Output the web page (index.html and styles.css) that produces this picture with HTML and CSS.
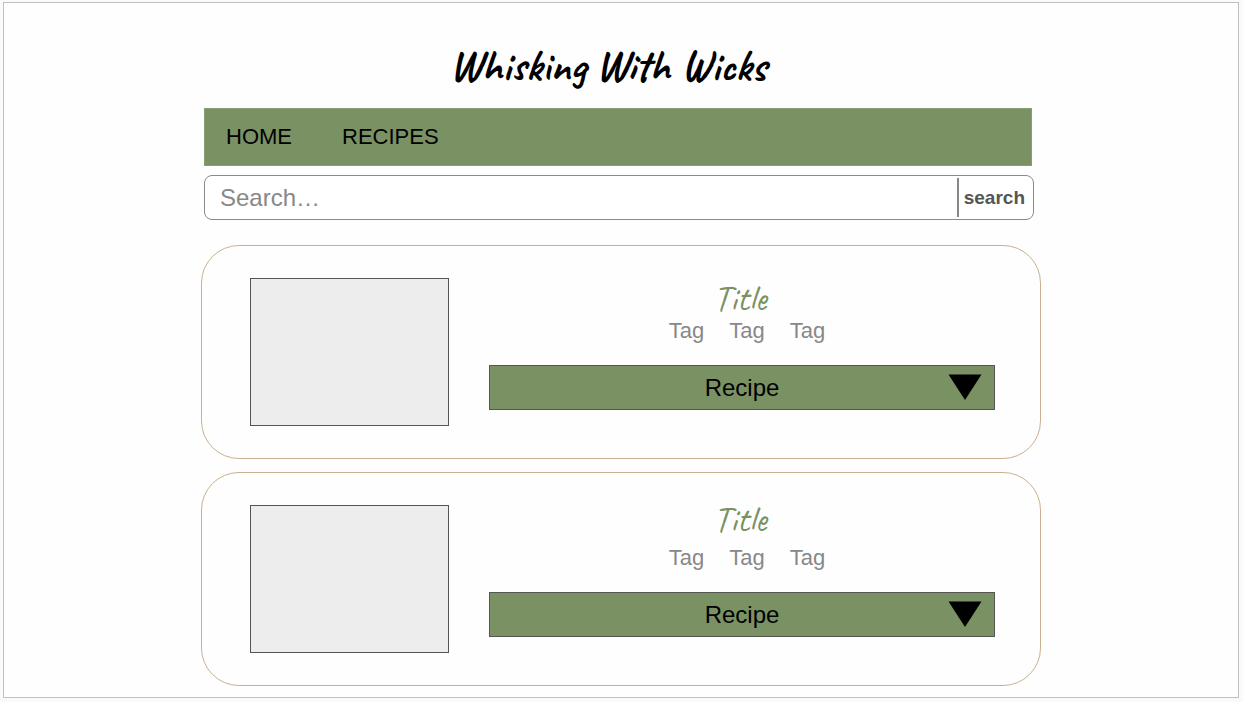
FILE: index.html
```html
<!DOCTYPE html>
<html lang="en">
<head>
<meta charset="utf-8">
<meta name="viewport" content="width=device-width, initial-scale=1">
<title>Whisking With Wicks</title>
<link rel="stylesheet" href="styles.css">
</head>
<body>
<div class="frame">
  <div class="page">
    <header>
      <h1 class="brand">Whisking With Wicks</h1>
      <nav class="nav">
        <a href="#">HOME</a>
        <a href="#">RECIPES</a>
      </nav>
      <form class="search" role="search">
        <input class="search-input" type="search" placeholder="Search…" aria-label="Search recipes">
        <button class="search-button" type="button">search</button>
      </form>
    </header>
    <main class="cards">
      <article class="card">
        <div class="photo"></div>
        <div class="info">
          <h2 class="title">Title</h2>
          <ul class="tags"><li>Tag</li><li>Tag</li><li>Tag</li></ul>
          <button class="recipe" type="button" aria-expanded="false">Recipe
            <svg class="arrow" viewBox="0 0 34 26" aria-hidden="true"><path d="M0.5 0.5H33.5L17 26Z"/></svg>
          </button>
        </div>
      </article>
      <article class="card">
        <div class="photo"></div>
        <div class="info">
          <h2 class="title title-spaced">Title</h2>
          <ul class="tags"><li>Tag</li><li>Tag</li><li>Tag</li></ul>
          <button class="recipe" type="button" aria-expanded="false">Recipe
            <svg class="arrow" viewBox="0 0 34 26" aria-hidden="true"><path d="M0.5 0.5H33.5L17 26Z"/></svg>
          </button>
        </div>
      </article>
    </main>
  </div>
</div>
</body>
</html>
```
FILE: styles.css
```css
* {
  box-sizing: border-box;
}

body {
  margin: 0;
  padding: 2px 4px 4px 3px;
  background: #f9fafc;
  color: #000;
  font-family: "Liberation Sans", Arial, sans-serif;
}

.frame {
  min-height: calc(100vh - 6px);
  padding: 39px 16px 11px;
  border: 1px solid #c0c0c0;
  background: #fefefe;
}

.page {
  max-width: 840px;
  margin: 0 auto;
}

.brand,
.title {
  margin: 0;
  font-family: Caveat, Lato, sans-serif;
  text-align: center;
}

.brand {
  padding-right: 26px;
  font-size: 43px;
  line-height: 48px;
  font-weight: 700;
}

.nav {
  display: flex;
  align-items: center;
  gap: 50px;
  height: 58px;
  margin: 18px 9px 9px 3px;
  padding: 0 21px;
  border: 1px solid #87a071;
  background: #7a9263;
  font-size: 22px;
  line-height: 28px;
}

.nav a {
  color: inherit;
  text-decoration: none;
}

.search {
  display: flex;
  align-items: stretch;
  height: 45px;
  margin: 0 7px 25px 3px;
  padding: 2px;
  border: 1px solid #8a8a8a;
  border-radius: 8px;
  background: #fff;
}

.search-input {
  flex: 1;
  min-width: 0;
  padding: 0 13px;
  border: 0;
  background: transparent;
  color: #333;
  font: 24px "Liberation Sans", Arial, sans-serif;
}

.search-input::placeholder {
  color: #888;
  opacity: 1;
}

.search-button {
  padding: 0 6px 0 5px;
  border: 0;
  border-left: 2px solid #888;
  background: transparent;
  color: #555;
  font: bold 19px "Liberation Sans", Arial, sans-serif;
}

.cards {
  display: grid;
  gap: 13px;
}

.card {
  display: flex;
  gap: 40px;
  padding: 32px 45px 32px 48px;
  border: 1px solid #c9b08f;
  border-radius: 38px;
}

.photo {
  flex: 0 1 199px;
  height: 148px;
  border: 1px solid #555;
  background: #ededed;
}

.info {
  flex: 1;
  display: flex;
  flex-direction: column;
  justify-content: flex-end;
  padding-bottom: 16px;
}

.title {
  margin-bottom: 5px;
  padding-right: 4px;
  color: #7a9263;
  font-size: 36px;
  line-height: 28px;
  font-weight: 400;
}

.title-spaced {
  margin-bottom: 11px;
}

.tags {
  display: flex;
  justify-content: center;
  gap: 25px;
  margin: 0 0 20px;
  padding: 0 0 0 10px;
  color: #888;
  font-size: 22px;
  line-height: 28px;
  list-style: none;
}

.recipe {
  position: relative;
  height: 45px;
  padding: 0;
  border: 1px solid #555;
  background: #7a9263;
  color: #000;
  font: 24px "Liberation Sans", Arial, sans-serif;
}

.arrow {
  position: absolute;
  top: 8px;
  right: 12px;
  width: 34px;
  height: 26px;
}
```
